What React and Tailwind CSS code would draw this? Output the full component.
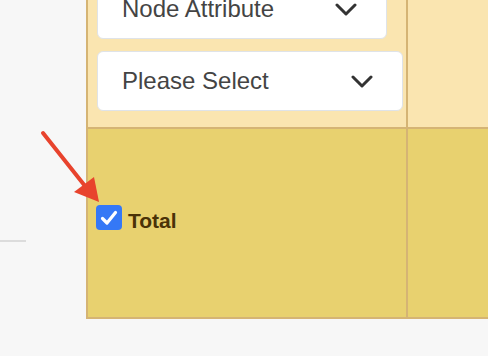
import React from "react";

function Chevron() {
  return (
    <svg width="22" height="13" viewBox="0 0 22 13" className="shrink-0">
      <path d="M2 2 L11 11 L20 2" fill="none" stroke="#333" strokeWidth="3" strokeLinecap="round" strokeLinejoin="round" />
    </svg>
  );
}

function Select({ label, w }) {
  return (
    <div className={`${w} h-[60px] bg-white border-[1.5px] border-[#dfe3e8] rounded-[6px] flex items-center justify-between pl-[24px] pr-[29px]`}>
      <span className="text-[24px] text-[#444] leading-none">{label}</span>
      <Chevron />
    </div>
  );
}

export default function App() {
  return (
    <div className="w-[488px] h-[356px] overflow-hidden bg-[#f7f7f7] relative flex" style={{ fontFamily: '"Liberation Sans", Arial, sans-serif' }}>
      <div className="w-[86px] shrink-0">
        <div className="mt-[240px] h-[1.5px] w-[26px] bg-[#dcdcdc]" />
      </div>
      <div className="w-[520px] shrink-0 -mt-[32px] self-start border-2 border-[#d5b474]">
        <div className="flex border-b-2 border-[#d5b474] bg-[#fae5b0]">
          <div className="w-[320px] shrink-0 border-r-2 border-[#d5b474] pt-[9px] pl-[9px] pr-[3px] pb-[16px] flex flex-col gap-[12px]">
            <Select label="Node Attribute" w="w-[290px]" />
            <Select label="Please Select" w="w-[306px]" />
          </div>
          <div className="flex-1" />
        </div>
        <div className="flex bg-[#e8d16f] h-[188px]">
          <div className="w-[320px] shrink-0 border-r-2 border-[#d5b474] pl-[8px] pt-[76px]">
            <div className="flex items-end gap-[6px]">
              <div className="w-[26px] h-[25px] rounded-[4px] bg-[#3578f6] flex items-center justify-center">
                <svg width="18" height="16" viewBox="0 0 18 16">
                  <path d="M2.5 8.5 L7 13 L15.5 2.5" fill="none" stroke="white" strokeWidth="3.2" strokeLinecap="round" strokeLinejoin="round" />
                </svg>
              </div>
              <span className="text-[21px] font-bold text-[#4a3207] leading-none mb-[-1px]">Total</span>
            </div>
          </div>
          <div className="flex-1" />
        </div>
      </div>
      <svg className="absolute left-0 top-0 pointer-events-none" width="488" height="356">
        <line x1="43" y1="133" x2="85" y2="186" stroke="#e8432d" strokeWidth="4" strokeLinecap="round" />
        <polygon points="74,192 94,177 99,202" fill="#e8432d" />
      </svg>
    </div>
  );
}
